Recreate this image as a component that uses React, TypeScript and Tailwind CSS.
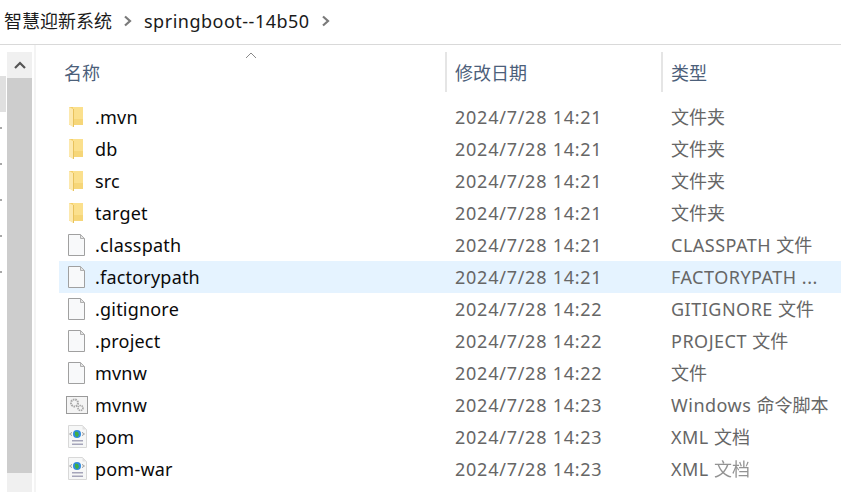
const sans = "font-['Noto_Sans','Noto_Sans_CJK_SC',sans-serif]";

type Kind = "folder" | "file" | "script" | "xml";

const rows: { name: string; date: string; latin?: string; cjk?: string; kind: Kind; selected?: boolean; faded?: boolean }[] = [
  { name: ".mvn", date: "2024/7/28 14:21", cjk: "文件夹", kind: "folder" },
  { name: "db", date: "2024/7/28 14:21", cjk: "文件夹", kind: "folder" },
  { name: "src", date: "2024/7/28 14:21", cjk: "文件夹", kind: "folder" },
  { name: "target", date: "2024/7/28 14:21", cjk: "文件夹", kind: "folder" },
  { name: ".classpath", date: "2024/7/28 14:21", latin: "CLASSPATH ", cjk: "文件", kind: "file" },
  { name: ".factorypath", date: "2024/7/28 14:21", latin: "FACTORYPATH ...", kind: "file", selected: true },
  { name: ".gitignore", date: "2024/7/28 14:22", latin: "GITIGNORE ", cjk: "文件", kind: "file" },
  { name: ".project", date: "2024/7/28 14:22", latin: "PROJECT ", cjk: "文件", kind: "file" },
  { name: "mvnw", date: "2024/7/28 14:22", cjk: "文件", kind: "file" },
  { name: "mvnw", date: "2024/7/28 14:23", latin: "Windows ", cjk: "命令脚本", kind: "script" },
  { name: "pom", date: "2024/7/28 14:23", latin: "XML ", cjk: "文档", kind: "xml" },
  { name: "pom-war", date: "2024/7/28 14:23", latin: "XML ", cjk: "文档", faded: true, kind: "xml" },
];

function FolderIcon() {
  return (
    <svg width="24" height="24" viewBox="0 0 24 24">
      <path d="M5 2h14v18H5z" fill="#f4cf68" />
      <path d="M9 2h10v12H9z" fill="#fbe08d" />
      <path d="M9 14h10v6H9z" fill="#f6d678" />
      <path d="M5 2l4 2v18l-4-2.500z" fill="#fde9ae" />
      <path d="M9.500 4v18" stroke="#e8c25c" strokeWidth="1" />
    </svg>
  );
}

function FileIcon() {
  return (
    <svg width="24" height="24" viewBox="0 0 24 24">
      <path d="M4.500 1.500h12l4 4v17h-16z" fill="#f8f9fa" stroke="#a0a0a0" />
      <path d="M16.500 1.500v4h4z" fill="#e4e4e4" stroke="#b0b0b0" />
    </svg>
  );
}

function ScriptIcon() {
  return (
    <svg width="24" height="24" viewBox="0 0 24 24">
      <rect x="2.500" y="3.500" width="21" height="17" fill="#f4f4f4" stroke="#9a9a9a" />
      <circle cx="10.500" cy="10" r="3.500" fill="none" stroke="#a8a8a8" strokeWidth="2" strokeDasharray="1.600 .8" />
      <circle cx="16.500" cy="15" r="2.500" fill="none" stroke="#a8a8a8" strokeWidth="1.600" strokeDasharray="1.400 .7" />
    </svg>
  );
}

function XmlIcon() {
  return (
    <svg width="24" height="24" viewBox="0 0 24 24">
      <path d="M4.500 .5h14l4 4v18h-18z" fill="#f6f7f7" stroke="#d8d8d8" />
      <path d="M18.500 .5v4h4z" fill="#e2e2e2" />
      <path d="M5 9l3-2v1l-2 1 2 1v1zM21 9l-3-2v1l2 1-2 1v1z" fill="#8a8a8a" />
      <circle cx="13" cy="9" r="4" fill="#2f8be0" />
      <path d="M11 6.500l3 .5 1 3-2 2.500-2-2.500z" fill="#3fae45" />
      <path d="M8 15h11v1.500H8zM8 18.500h11V20H8z" fill="#a5a5ba" />
    </svg>
  );
}

const icons = { folder: FolderIcon, file: FileIcon, script: ScriptIcon, xml: XmlIcon };

function Chevron() {
  return (
    <svg width="10" height="12" viewBox="0 0 10 12">
      <path d="M2 1.500l5 4.500-5 4.500" fill="none" stroke="#7a7a7a" strokeWidth="2.200" />
    </svg>
  );
}

function Row({ name, date, latin, cjk, kind, selected, faded }: (typeof rows)[number]) {
  const Icon = icons[kind];
  return (
    <div className={`flex h-8 items-center ${selected ? "bg-[#e5f3ff]" : ""}`}>
      <div className="flex w-[386px] items-center pl-[5px]">
        <span className="flex w-6 justify-center"><Icon /></span>
        <span className="ml-[7px] tracking-[0.2px] text-[#0a0a0a]">{name}</span>
      </div>
      <div className="w-[216px] pl-[10px] tracking-[0.75px] text-[#666]">{date}</div>
      <div className="whitespace-pre pl-[10px] text-[#666]">
        <span className="tracking-[0.5px]">{latin}</span>
        <span className={faded ? "opacity-70 blur-[0.5px]" : ""}>{cjk}</span>
      </div>
    </div>
  );
}

export default function App() {
  return (
    <div className={`flex h-[492px] w-[841px] flex-col overflow-hidden bg-white text-[18px] leading-6 ${sans}`}>
      <div className="flex h-[45px] shrink-0 items-center gap-[11px] border-b border-[#d9d9d9] pb-[3px] pl-1 text-[#1a1a1a]">
        <span>智慧迎新系统</span>
        <Chevron />
        <span className="tracking-[0.5px]">springboot--14b50</span>
        <Chevron />
      </div>
      <div className="flex min-h-0 flex-1">
        <div className="flex w-[7px] shrink-0 flex-col pt-[31px]">
          <div className="h-9 w-[6px] bg-[#e0e0e0]" />
          <div className="flex flex-col gap-[34px] pt-[15px]">
            {[0, 1, 2, 3, 4].map((i) => (
              <div key={i} className="h-[2px] w-[2px] bg-[#a8a8a8]" />
            ))}
          </div>
        </div>
        <div className="mt-[7px] flex w-[25px] shrink-0 flex-col bg-[#f0f0f0]">
          <div className="flex h-[26px] items-center justify-center">
            <svg width="12" height="8" viewBox="0 0 12 8">
              <path d="M1 7l5-5 5 5" fill="none" stroke="#555" strokeWidth="2.200" />
            </svg>
          </div>
          <div className="h-[395px] bg-[#cdcdcd]" />
        </div>
        <div className="ml-[2px] w-[2px] shrink-0 bg-[#f4f4f4]" />
        <div className="min-w-0 flex-1 pl-[23px]">
          <div className="relative flex h-[56px] pt-[7px] text-[#4c607a]">
            <svg className="absolute left-[186px] top-[7px]" width="12" height="8" viewBox="0 0 12 8">
              <path d="M1 6l5-5 5 5" fill="none" stroke="#8a8a8a" />
            </svg>
            <div className="flex h-10 w-[386px] items-center pl-[5px]"><span className="translate-y-px">名称</span></div>
            <div className="flex h-10 w-[216px] items-center border-l-2 border-[#e5e5e5] pl-2"><span className="translate-y-px">修改日期</span></div>
            <div className="flex h-10 items-center border-l-2 border-[#e5e5e5] pl-2"><span className="translate-y-px">类型</span></div>
          </div>
          {rows.map((r, i) => (
            <Row key={i} {...r} />
          ))}
        </div>
      </div>
    </div>
  );
}
